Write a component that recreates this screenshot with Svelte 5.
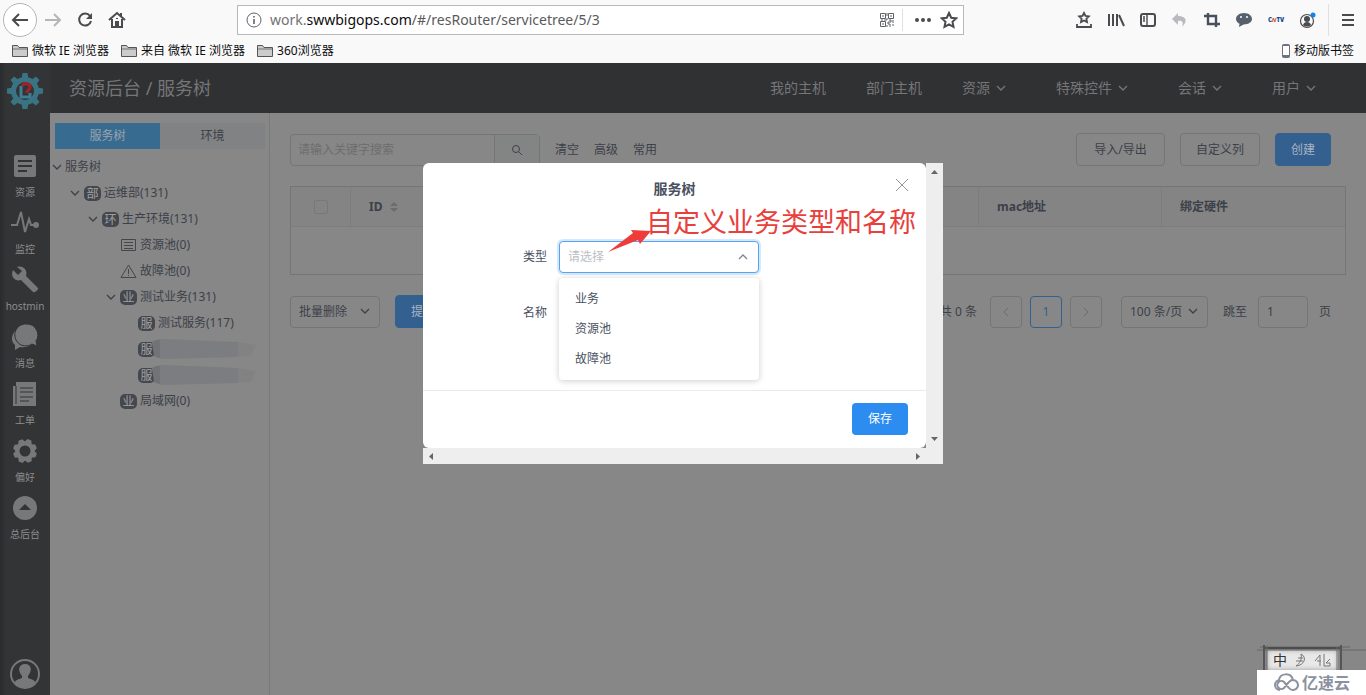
<script>
    const bookmarks = ["微软 IE 浏览器", "来自 微软 IE 浏览器", "360浏览器"];

    const sideItems = [
        { label: "资源", icon: "doc" },
        { label: "监控", icon: "pulse" },
        { label: "hostmin", icon: "wrench" },
        { label: "消息", icon: "chat" },
        { label: "工单", icon: "sheet" },
        { label: "偏好", icon: "gear" },
        { label: "总后台", icon: "up" },
    ];

    const menus = [
        { label: "我的主机" },
        { label: "部门主机" },
        { label: "资源", sub: true },
        { label: "特殊控件", sub: true },
        { label: "会话", sub: true },
        { label: "用户", sub: true },
    ];

    const tree = [
        { level: 0, open: true, text: "服务树" },
        { level: 1, open: true, badge: "部", text: "运维部(131)" },
        { level: 2, open: true, badge: "环", text: "生产环境(131)" },
        { level: 3, icon: "list", text: "资源池(0)" },
        { level: 3, icon: "warn", text: "故障池(0)" },
        { level: 3, open: true, badge: "业", text: "测试业务(131)" },
        { level: 4, badge: "服", text: "测试服务(117)" },
        { level: 4, badge: "服", hidden: true },
        { level: 4, badge: "服", hidden: true },
        { level: 3, badge: "业", text: "局域网(0)" },
    ];

    const types = ["业务", "资源池", "故障池"];
    const teeth = [0, 45, 90, 135, 180, 225, 270, 315];

    let tab = $state("tree");
    let type = $state("");
    let open = $state(true);

    function choose(item) {
        type = item;
        open = false;
    }
</script>

{#snippet chevron()}
    <svg class="chevron" width="10" height="10" viewBox="0 0 10 10"><path d="M1 3l4 4 4-4" /></svg>
{/snippet}

<div class="browser">
    <div class="toolbar">
        <button class="back" aria-label="后退">
            <svg width="18" height="18" viewBox="0 0 18 18"><path d="M17 9H2M8 3L2 9l6 6" /></svg>
        </button>
        <button class="faded" aria-label="前进">
            <svg width="18" height="18" viewBox="0 0 18 18"><path d="M1 9h15M10 3l6 6-6 6" /></svg>
        </button>
        <button aria-label="刷新">
            <svg width="18" height="18" viewBox="0 0 18 18"><path d="M14 5a6 6 0 1 0 1 5" /><path d="M16 2v6h-6z" fill="#4a4a4f" stroke="none" /></svg>
        </button>
        <button aria-label="主页">
            <svg width="18" height="18" viewBox="0 0 18 18"><path d="M1 9l8-7 8 7M4 8v8h10V8" /><path d="M8 16v-5h2v5M9 7v1M13 5V2" /></svg>
        </button>

        <div class="url">
            <svg width="16" height="16" viewBox="0 0 16 16" class="thin"><circle cx="8" cy="8" r="7" /><path d="M8 7v5M8 4v1.500" stroke-width="1.600" /></svg>
            <div class="address"><span>work.</span>swwbigops.com<span class="path">/#/resRouter/servicetree/5/3</span></div>
            <svg width="14" height="14" viewBox="0 0 14 14" class="thin">
                <path d="M.5.500h5v5h-5zM8.500.500h5v5h-5zM.5 8.500h5v5h-5z" />
                <path d="M2 3h2M10 3h2M2 11h2M7 0v3M7 5v2H4M1 7h2M9 7h2v2H8v2h2v3M13 7v3M12 12h2M7 12v2" />
            </svg>
            <i></i>
            <svg width="18" height="18" viewBox="0 0 18 18" class="solid"><circle cx="3" cy="9" r="2" /><circle cx="9" cy="9" r="2" /><circle cx="15" cy="9" r="2" /></svg>
            <svg width="18" height="18" viewBox="0 0 18 18"><path d="M9 2l2.200 4.700 5 .6-3.700 3.500 1 5L9 13.300l-4.500 2.500 1-5L1.800 7.300l5-.6z" /></svg>
        </div>

        <button aria-label="书签">
            <svg width="18" height="18" viewBox="0 0 18 18"><path d="M9 2l1.500 3 3.300.4-2.400 2.300.6 3.300-3-1.600L6 11l.6-3.300-2.400-2.300 3.300-.4zM2 13v3h14v-3" stroke-width="1.800" /></svg>
        </button>
        <button aria-label="我的足迹">
            <svg width="18" height="18" viewBox="0 0 18 18"><path d="M2 3v12M6 3v12M10 3v12M12 4l5 11" /></svg>
        </button>
        <button aria-label="侧栏">
            <svg width="18" height="18" viewBox="0 0 18 18"><rect x="2" y="3" width="14" height="12" rx="2" /><path d="M8 3v12M4 6h2M4 8h2M4 10h2" stroke-width="1.400" /></svg>
        </button>
        <button class="faded" aria-label="撤销">
            <svg width="18" height="18" viewBox="0 0 18 18"><path d="M7 2L1 8l6 6v-4c4-1 6 1 4 6 7-7 3-11-4-11z" fill="#b8babd" stroke="none" /></svg>
        </button>
        <button aria-label="截图">
            <svg width="18" height="18" viewBox="0 0 18 18"><path d="M5 2v11h12M1 5h12v11" stroke-width="2.400" stroke="#45515d" /></svg>
        </button>
        <button aria-label="聊天">
            <svg width="18" height="18" viewBox="0 0 18 18"><path d="M9 2C4 2 1 5 1 8c0 2 1.500 4 3.500 4.800L4 16l4.500-2.600C14 13.400 17 11 17 8s-3-6-8-6z" fill="#56616d" stroke="none" /><circle cx="6" cy="6" r="1" fill="#fff" stroke="none" /><circle cx="12" cy="6" r="1" fill="#fff" stroke="none" /></svg>
        </button>
        <button class="cntv" aria-label="CNTV"><b>C</b><em>N</em><b>TV</b></button>
        <button aria-label="账户">
            <svg width="18" height="18" viewBox="0 0 18 18"><circle cx="8" cy="10" r="6.500" stroke-width="1.200" /><circle cx="8" cy="8" r="3" fill="#4a4a4f" stroke="none" /><path d="M4 14c1-4 7-4 8 0-2 2-6 2-8 0z" fill="#4a4a4f" stroke="none" /><circle cx="14" cy="4" r="2.500" fill="#1683e8" stroke="none" /></svg>
        </button>
        <button class="more" aria-label="菜单">
            <svg width="18" height="18" viewBox="0 0 18 18"><path d="M3 4h12M3 9h12M3 14h12" /></svg>
        </button>
    </div>

    <div class="bookmarks">
        {#each bookmarks as item}
            <a href="#/">
                <svg width="16" height="14" viewBox="0 0 16 14"><path d="M.5 12.500v-11h5l1.500 2h8.500v9z" fill="#ccc" stroke="#555" /><path d="M1 5h14" stroke="#777" /></svg>
                {item}
            </a>
        {/each}
        <a href="#/" class="mobile">
            <svg width="8" height="14" viewBox="0 0 8 14"><rect x=".5" y=".5" width="7" height="13" rx="1" fill="#6b7480" stroke="#6b7480" /><path d="M1 2h6v9H1z" fill="#fff" /></svg>
            移动版书签
        </a>
    </div>

    <div class="app">
        <aside>
            <svg class="logo" width="38" height="38" viewBox="0 0 38 38">
                {#each teeth as angle}
                    <path d="M15.500 8l1-7h5l1 7z" fill="#3a7484" transform="rotate({angle} 19 19)" />
                {/each}
                <circle cx="19" cy="19" r="11.500" fill="none" stroke="#3a7484" stroke-width="5" />
                <path d="M15 14v11h9v-4" fill="none" stroke="#3f7f92" stroke-width="3" />
                <path d="M16 14c2-3 8-3 8 1 0 3-3 3-3 6" fill="none" stroke="#96252c" stroke-width="3.500" />
            </svg>
            <nav>
                {#each sideItems as item}
                    <a href="#/">
                        <svg width="28" height="28" viewBox="0 0 28 28">
                            {#if item.icon === "doc"}
                                <path d="M5 3h18q2 0 2 2v18q0 2-2 2H5q-2 0-2-2V5q0-2 2-2z" /><path d="M7 9h14M7 14h14M7 19h9" class="dark" stroke-width="2" />
                            {:else if item.icon === "pulse"}
                                <path d="M0 16h6l4-13 4 20 4-13 2 6h5" class="line" /><circle cx="25" cy="16" r="3" />
                            {:else if item.icon === "wrench"}
                                <path d="M2 4l5 5 4-4-5-4c6-2 11 3 9 9l12 12c1 1-3 5-5 4L10 14C4 16-1 10 2 4z" />
                            {:else if item.icon === "chat"}
                                <path d="M4 8c-5 6-3 12 0 14v5l5-3c5 1 10-1 12-3z" /><path d="M16 1a11 11 0 1 0 5 20l5 2-1-5A11 11 0 0 0 16 1z" stroke="#323435" stroke-width="1" />
                            {:else if item.icon === "sheet"}
                                <path d="M5 2h20v24H2V6h3z" /><path d="M9 8h13M9 12h13M9 17h13M9 21h9M5 6v18" class="dark" stroke-width="1" />
                            {:else if item.icon === "gear"}
                                {#each teeth as angle}
                                    <path d="M10 6l2-4h4l2 4z" transform="rotate({angle + 22} 14 14)" />
                                {/each}
                                <circle cx="14" cy="14" r="7.500" class="ring" />
                            {:else}
                                <circle cx="14" cy="14" r="12" /><path d="M8 16l6-6 6 6z" fill="#323435" />
                            {/if}
                        </svg>
                        <span>{item.label}</span>
                    </a>
                {/each}
            </nav>
            <svg class="avatar" width="30" height="30" viewBox="0 0 30 30">
                <circle cx="15" cy="15" r="14" fill="none" stroke="#777879" stroke-width="2" />
                <path d="M4 24c2-4 6-4 8-5v-2c-5-6-3-12 3-12s8 6 3 12v2c2 1 6 1 8 5-6 6-16 6-22 0z" fill="#777879" />
            </svg>
        </aside>

        <div class="content">
            <header>
                <h1>资源后台 / 服务树</h1>
                <nav>
                    {#each menus as item}
                        <a href="#/" class:sub={item.sub}>
                            {item.label}
                            {#if item.sub}{@render chevron()}{/if}
                        </a>
                    {/each}
                </nav>
            </header>

            <div class="body">
                <section class="side">
                    <div class="tabs">
                        <button class:active={tab === "tree"} onclick={() => (tab = "tree")}>服务树</button>
                        <button class:active={tab === "env"} onclick={() => (tab = "env")}>环境</button>
                    </div>
                    <ul>
                        {#each tree as node}
                            <li style="padding-left: {node.level * 18}px">
                                <span class="caret">{#if node.open}{@render chevron()}{/if}</span>
                                {#if node.badge}<b>{node.badge}</b>{/if}
                                {#if node.icon}
                                    <svg class="node-icon" width="17" height="15" viewBox="0 0 17 15">
                                        {#if node.icon === "list"}
                                            <path d="M1.500 1.500h14v11h-14zM4 4.500h9M4 7.500h9M4 10.500h9" />
                                        {:else}
                                            <path d="M8.500 1L1 13.500h15zM8.500 5v5M8.500 11v1" />
                                        {/if}
                                    </svg>
                                {/if}
                                {#if node.hidden}
                                    <svg class="smudge" width="105" height="22" viewBox="0 0 105 22">
                                        <path d="M0 3l10-2 76 3v15l-75 2-8-2z" fill="#7c7d80" />
                                        <path d="M0 5q4-4 8-3v18l-6-2z" fill="#727376" />
                                        <path d="M86 4l18 3-5 11-13 1z" fill="#828283" />
                                    </svg>
                                {:else}
                                    {node.text}
                                {/if}
                            </li>
                        {/each}
                    </ul>
                </section>

                <main>
                    <div class="bar">
                        <div class="search">
                            <input type="text" placeholder="请输入关键字搜索" aria-label="搜索" />
                            <button aria-label="搜索">
                                <svg width="12" height="12" viewBox="0 0 12 12"><circle cx="5" cy="5" r="3.500" /><path d="M8 8l3 3" /></svg>
                            </button>
                        </div>
                        <a href="#/">清空</a>
                        <a href="#/">高级</a>
                        <a href="#/">常用</a>
                        <button class="btn push import">导入/导出</button>
                        <button class="btn">自定义列</button>
                        <button class="btn primary">创建</button>
                    </div>

                    <table>
                        <thead>
                            <tr>
                                <th class="check"><input type="checkbox" aria-label="全选" /></th>
                                <th>
                                    ID
                                    <svg width="8" height="12" viewBox="0 0 8 12"><path d="M0 5l4-4 4 4zM0 7l4 4 4-4z" fill="#6b6c6e" /></svg>
                                </th>
                                <th class="wide">mac地址</th>
                                <th class="wide">绑定硬件</th>
                            </tr>
                        </thead>
                        <tbody>
                            <tr><td colspan="4"></td></tr>
                        </tbody>
                    </table>

                    <div class="bar footer">
                        <div class="picker batch">
                            <select aria-label="批量操作"><option>批量删除</option></select>
                            {@render chevron()}
                        </div>
                        <button class="btn primary">提交</button>
                        <span class="push total">共 0 条</span>
                        <button class="page muted" aria-label="上一页"><svg width="8" height="10" viewBox="0 0 8 10"><path d="M6 1L2 5l4 4" /></svg></button>
                        <button class="page current">1</button>
                        <button class="page muted" aria-label="下一页"><svg width="8" height="10" viewBox="0 0 8 10"><path d="M2 1l4 4-4 4" /></svg></button>
                        <div class="picker size">
                            <select aria-label="每页条数"><option>100 条/页</option></select>
                            {@render chevron()}
                        </div>
                        <label>跳至 <input type="text" value="1" /> 页</label>
                    </div>
                </main>
            </div>
        </div>

        <div class="wrap">
            <div class="window">
                <form class="modal">
                    <h2>服务树</h2>
                    <button type="button" class="close" aria-label="关闭">
                        <svg width="12" height="12" viewBox="0 0 12 12"><path d="M0 0l12 12M12 0L0 12" /></svg>
                    </button>
                    <div class="fields">
                        <div class="field">
                            <label for="type">类型</label>
                            <div class="control">
                                <select id="type" bind:value={type} class:open>
                                    <option value="">请选择</option>
                                    {#each types as item}<option>{item}</option>{/each}
                                </select>
                                <svg class="chevron" width="10" height="10" viewBox="0 0 10 10"><path d="M1 7l4-4 4 4" /></svg>
                                {#if open}
                                    <div class="options">
                                        {#each types as item}
                                            <button type="button" onclick={() => choose(item)}>{item}</button>
                                        {/each}
                                    </div>
                                {/if}
                            </div>
                        </div>
                        <div class="field">
                            <label for="name">名称</label>
                            <div class="control"><input id="name" type="text" /></div>
                        </div>
                    </div>
                    <div class="actions"><button type="button">保存</button></div>

                    <p class="note">自定义业务类型和名称</p>
                    <svg class="arrow" width="46" height="26" viewBox="0 0 46 26"><path d="M1 24L26 5l-2-3 20 1-11 13-2-4z" fill="#f03b3b" /></svg>
                </form>
                <div class="scroll-y">
                    <svg width="7" height="4" viewBox="0 0 7 4"><path d="M0 4l3.500-4L7 4z" /></svg>
                    <svg width="7" height="4" viewBox="0 0 7 4"><path d="M0 0l3.500 4L7 0z" /></svg>
                </div>
                <div class="scroll-x">
                    <svg width="4" height="7" viewBox="0 0 4 7"><path d="M4 0L0 3.500 4 7z" /></svg>
                    <svg width="4" height="7" viewBox="0 0 4 7"><path d="M0 0l4 3.500L0 7z" /></svg>
                </div>
            </div>
        </div>

        <div class="corner">
            <svg class="frame" width="109" height="26" viewBox="0 0 109 26">
                <path d="M0 5h109M3 2h90" stroke="#666" />
                <path d="M7 3h76" stroke="#4c4c4c" stroke-width="2" />
                <path d="M7 0v26M84 0v26" stroke="#555" stroke-width="2" />
                <path d="M10 0v26M80 1v25" stroke="#6f6f6f" />
            </svg>
            <div class="ime">
                <span>中</span>
                <svg width="14" height="14" viewBox="0 0 14 14"><path d="M7 1c6 3 4 11-5 12 4-3 6-6 5-12zM2 8h7M4 5h5" /></svg>
                <svg width="18" height="14" viewBox="0 0 18 14"><path d="M1 8l5-6v11M3 8h4M10 1v12h6v-3h-4l4-4" /></svg>
            </div>
            <div class="brand">
                <svg width="27" height="19" viewBox="0 0 27 19"><path d="M7 17a5 5 0 1 1 0-10M6 7c1-7 12-8 14 0M20 7a5 5 0 1 1-4 8l-5-6a4 4 0 1 0 0 6l5-6a5 5 0 0 1 4-2" /></svg>
                亿速云
            </div>
        </div>
    </div>
</div>

<style>
    :global(body) {
        margin: 0;
    }

    .browser {
        display: flex;
        flex-direction: column;
        min-height: 100vh;
        font-family: "Noto Sans", "Noto Sans CJK SC", sans-serif;
        font-size: 12px;
        line-height: 18px;
        color: #3c4048;
        background: #f9f9fa;
    }

    .browser * {
        box-sizing: border-box;
    }

    button,
    input,
    select {
        font: inherit;
        color: inherit;
        margin: 0;
        outline: none;
    }

    button {
        padding: 0;
        border: 0;
        background: none;
        cursor: pointer;
    }

    a {
        color: inherit;
        text-decoration: none;
    }

    svg {
        display: block;
        flex: none;
    }

    .toolbar {
        display: flex;
        align-items: center;
        height: 40px;
        padding-left: 3px;
    }

    .toolbar svg {
        fill: none;
        stroke: #4a4a4f;
        stroke-width: 2;
    }

    .toolbar svg.thin {
        stroke: #5f6368;
        stroke-width: 1;
    }

    .toolbar svg.solid {
        fill: #4a4a4f;
        stroke: none;
    }

    .toolbar button {
        display: flex;
        align-items: center;
        justify-content: center;
        width: 32px;
        height: 32px;
        flex: none;
    }

    .toolbar .back {
        width: 34px;
        height: 34px;
        border: 1px solid #b5b5b7;
        border-radius: 50%;
        background: #fff;
    }

    .toolbar .faded svg {
        stroke: #b5b5b7;
    }

    .toolbar .more {
        width: 38px;
        margin-left: 4px;
        border-left: 1px solid #e0e0e1;
    }

    .toolbar .cntv {
        font-size: 6px;
        font-weight: bold;
        color: #1d4b8f;
    }

    .cntv em {
        color: #d4452c;
    }

    .url {
        display: flex;
        align-items: center;
        flex: 1;
        gap: 8px;
        height: 30px;
        margin: 0 104px;
        padding: 0 5px 0 8px;
        border: 1px solid #b8b8b9;
        background: #fff;
    }

    .address {
        flex: 1;
        font-size: 14px;
        color: #0c0c0d;
    }

    .address span {
        color: #737373;
    }

    .address .path {
        color: #5a5a5c;
    }

    .url i {
        width: 1px;
        height: 22px;
        margin-right: 3px;
        background: #e0e0e1;
    }

    .bookmarks {
        display: flex;
        align-items: center;
        gap: 12px;
        height: 23px;
        padding: 0 12px 2px;
        color: #0c0c0d;
    }

    .bookmarks a {
        display: flex;
        align-items: center;
        gap: 4px;
    }

    .bookmarks svg {
        fill: none;
    }

    .bookmarks .mobile {
        margin-left: auto;
    }

    .app {
        position: relative;
        display: flex;
        flex: 1;
        background: #878787;
    }

    aside {
        display: flex;
        flex-direction: column;
        align-items: center;
        width: 50px;
        padding: 9px 0 6px;
        background: linear-gradient(90deg, #292b2c, #323435 6px);
        color: #8c8d8e;
    }

    aside nav {
        margin-top: 42px;
    }

    aside nav a {
        display: flex;
        flex-direction: column;
        align-items: center;
        gap: 3px;
        height: 57px;
        font-size: 10px;
    }

    aside nav svg {
        fill: #777879;
    }

    aside .dark {
        stroke: #323435;
        fill: none;
    }

    aside .line {
        stroke: #777879;
        stroke-width: 2;
        fill: none;
    }

    aside .ring {
        stroke: #777879;
        stroke-width: 4;
        fill: none;
    }

    .avatar {
        margin-top: auto;
    }

    .content {
        display: flex;
        flex-direction: column;
        flex: 1;
    }

    header {
        display: flex;
        align-items: center;
        justify-content: space-between;
        height: 50px;
        padding: 0 40px 0 19px;
        background: #303133;
        color: #757678;
    }

    h1 {
        margin: 0;
        font-size: 18px;
        font-weight: normal;
        line-height: 24px;
    }

    header nav {
        display: flex;
        gap: 40px;
        font-size: 14px;
    }

    header a {
        display: flex;
        align-items: center;
        gap: 6px;
    }

    header .sub {
        padding-right: 10px;
    }

    .chevron {
        fill: none;
        stroke: currentColor;
        stroke-width: 1.300;
        pointer-events: none;
    }

    .body {
        display: flex;
        flex: 1;
    }

    .side {
        width: 220px;
        padding: 10px 4px 0 5px;
        border-right: 1px solid #797a7b;
    }

    .tabs {
        display: flex;
    }

    .tabs button {
        flex: 1;
        height: 26px;
        background: #808284;
    }

    .tabs .active {
        background: #386b90;
        color: #98a3ab;
    }

    .side ul {
        list-style: none;
        margin: 5px 0 0;
        padding: 0;
    }

    .side li {
        display: flex;
        align-items: center;
        height: 26px;
        white-space: nowrap;
    }

    .caret {
        width: 10px;
        margin-left: -3px;
        margin-right: 3px;
    }

    .side b {
        width: 17px;
        height: 15px;
        margin: 0 3px 0 1px;
        border-radius: 5px;
        background: #44474e;
        color: #a0a0a0;
        line-height: 15px;
        font-weight: normal;
        text-align: center;
    }

    .node-icon {
        margin: 0 3px 0 1px;
        fill: none;
        stroke: #43464b;
    }

    .smudge {
        margin-left: -6px;
    }

    main {
        flex: 1;
        padding: 20px 20px 0;
    }

    .bar {
        display: flex;
        align-items: center;
        gap: 15px;
        padding-right: 15px;
    }

    .search {
        display: flex;
        width: 250px;
        height: 32px;
        border: 1px solid #747576;
        border-radius: 4px;
    }

    .search input {
        flex: 1;
        min-width: 0;
        padding: 0 7px;
        border: 0;
        background: none;
    }

    .search input::placeholder {
        color: #6c6d6f;
    }

    .search button {
        display: flex;
        align-items: center;
        justify-content: center;
        width: 45px;
        border-left: 1px solid #747576;
        background: #838484;
    }

    .search svg,
    .page svg {
        fill: none;
        stroke: currentColor;
    }

    .push {
        margin-left: auto;
    }

    .btn {
        height: 33px;
        padding: 0 15px;
        border: 1px solid #747576;
        border-radius: 4px;
    }

    .import {
        width: 89px;
    }

    .btn.primary {
        border-color: #34608f;
        background: #34608f;
        color: #a9b5c2;
    }

    table {
        width: 100%;
        height: 89px;
        margin-top: 20px;
        border: 1px solid #747576;
        border-spacing: 0;
        table-layout: fixed;
    }

    th {
        height: 40px;
        padding: 0 18px;
        border-right: 1px solid #7c7d7e;
        border-bottom: 1px solid #7c7d7e;
        background: #848485;
        text-align: left;
    }

    th:last-child {
        border-right: 0;
    }

    th svg {
        display: inline-block;
        margin-left: 4px;
        vertical-align: middle;
    }

    .check {
        width: 60px;
        text-align: center;
    }

    .check input {
        display: block;
        appearance: none;
        width: 14px;
        height: 14px;
        margin: 0 auto;
        border: 1px solid #777879;
        border-radius: 2px;
    }

    .wide {
        width: 183px;
    }

    td {
        padding: 0;
    }

    .footer {
        margin-top: 20px;
    }

    .picker {
        position: relative;
        height: 32px;
    }

    .picker select,
    .footer input {
        appearance: none;
        width: 100%;
        height: 32px;
        padding: 0 8px;
        border: 1px solid #747576;
        border-radius: 4px;
        background: none;
    }

    .picker .chevron {
        position: absolute;
        top: 10px;
        right: 10px;
    }

    .batch {
        width: 90px;
    }

    .size {
        width: 87px;
        margin-left: 11px;
    }

    .footer .push {
        margin-right: -2px;
    }

    .page {
        display: flex;
        align-items: center;
        justify-content: center;
        width: 32px;
        height: 32px;
        margin-right: -7px;
        border: 1px solid #747576;
        border-radius: 4px;
    }

    .muted {
        color: #67696b;
    }

    .current {
        border-color: #34608f;
        color: #34608f;
    }

    .footer label {
        display: flex;
        align-items: center;
        gap: 11px;
    }

    .footer input {
        width: 50px;
    }

    /* Modal */
    .wrap {
        position: absolute;
        inset: 0;
        display: flex;
        align-items: flex-start;
        justify-content: center;
        padding-top: 100px;
    }

    .window {
        display: grid;
        grid-template-columns: 1fr 17px;
        width: 520px;
        background: #878787;
        color: #495060;
    }

    .modal {
        position: relative;
        border-radius: 6px;
        background: #fff;
    }

    h2 {
        margin: 0;
        padding: 16px 0 0;
        font-size: 14px;
        line-height: 20px;
        text-align: center;
    }

    .close {
        position: absolute;
        top: 16px;
        right: 18px;
    }

    .close svg {
        fill: none;
        stroke: #999;
    }

    .fields {
        padding: 42px 0 37px 85px;
    }

    .field {
        display: flex;
        align-items: center;
        margin-bottom: 24px;
    }

    .field label {
        width: 51px;
        padding-right: 12px;
        text-align: right;
    }

    .control {
        position: relative;
        width: 200px;
    }

    .control select,
    .control input {
        display: block;
        appearance: none;
        width: 100%;
        height: 32px;
        padding: 0 8px;
        border: 1px solid #dddee1;
        border-radius: 4px;
        background: #fff;
        color: #bbbec4;
    }

    .control select.open {
        border-color: #57a3f3;
        box-shadow: 0 0 0 2px rgba(45, 140, 240, 0.2);
    }

    .control .chevron {
        position: absolute;
        top: 11px;
        right: 11px;
        stroke: #80848f;
    }

    .options {
        position: absolute;
        z-index: 1;
        top: 37px;
        left: 0;
        right: 0;
        padding: 6px 0;
        border-radius: 4px;
        background: #fff;
        box-shadow: 0 1px 6px rgba(0, 0, 0, 0.2);
    }

    .options button {
        display: block;
        width: 100%;
        height: 30px;
        padding: 0 16px;
        text-align: left;
    }

    .options button:hover {
        background: #f3f3f3;
    }

    .actions {
        padding: 12px 18px 13px;
        border-top: 1px solid #e9eaec;
        text-align: right;
    }

    .actions button {
        width: 56px;
        height: 32px;
        border-radius: 4px;
        background: #2d8cf0;
        color: #fff;
    }

    .note {
        position: absolute;
        top: 41px;
        left: 223px;
        margin: 0;
        font-size: 27px;
        line-height: 36px;
        white-space: nowrap;
        color: #e8403c;
    }

    .arrow {
        position: absolute;
        top: 65px;
        left: 184px;
    }

    .scroll-y,
    .scroll-x {
        display: flex;
        align-items: center;
        justify-content: space-between;
        background: #eee;
    }

    .scroll-y {
        flex-direction: column;
        padding: 7px 0;
    }

    .scroll-x {
        grid-column: span 2;
        height: 16px;
        padding: 0 23px 0 6px;
    }

    .scroll-y svg,
    .scroll-x svg {
        fill: #666;
    }

    .corner {
        position: absolute;
        right: 0;
        bottom: 0;
        width: 109px;
    }

    .frame {
        position: absolute;
        top: -5px;
        left: 0;
        fill: none;
    }

    .ime {
        display: flex;
        align-items: center;
        justify-content: space-between;
        height: 20px;
        margin: 0 28px 0 10px;
        padding: 0 6px;
        background: #e8e8e8;
        box-shadow: inset 0 0 5px #999;
        font-size: 14px;
        color: #333;
    }

    .ime svg {
        fill: none;
        stroke: #777;
    }

    .brand {
        position: relative;
        display: flex;
        align-items: center;
        justify-content: center;
        gap: 2px;
        height: 25px;
        background: #fff;
        color: #8b919f;
        font-size: 16px;
        font-weight: bold;
    }

    .brand svg {
        fill: none;
        stroke: #8b919f;
        stroke-width: 2;
    }
</style>
